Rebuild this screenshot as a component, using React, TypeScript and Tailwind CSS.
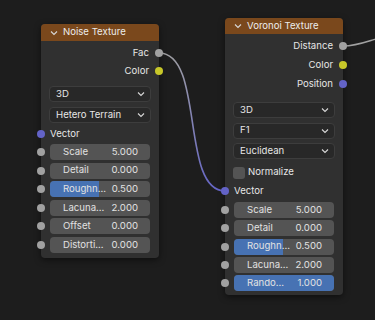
import React from "react";

const GRAY = "#a1a1a1";
const YELLOW = "#c7c729";
const PURPLE = "#6363c7";

function Socket({ color, side }: { color: string; side: "left" | "right" }) {
  return (
    <span
      className={`absolute top-1/2 -translate-y-1/2 w-[8px] h-[8px] rounded-full ${side === "left" ? "left-[-4px]" : "right-[-4px]"}`}
      style={{ backgroundColor: color }}
    />
  );
}

function Chevron({ className = "" }: { className?: string }) {
  return (
    <svg width="8" height="6" viewBox="0 0 8 6" className={className}>
      <path d="M1 1.5 L4 4.5 L7 1.5" stroke="#d8d8d8" strokeWidth="1.1" fill="none" />
    </svg>
  );
}

function OutRow({ label, color, h }: { label: string; color: string; h: string }) {
  return (
    <div className={`relative flex items-center justify-end pr-[10px] ${h}`}>
      <span>{label}</span>
      <Socket color={color} side="right" />
    </div>
  );
}

function InRow({ label, color, h, mt }: { label: string; color: string; h: string; mt: string }) {
  return (
    <div className={`relative flex items-center pl-[9px] ${h} ${mt}`}>
      <span>{label}</span>
      <Socket color={color} side="left" />
    </div>
  );
}

function Dropdown({ label, mt }: { label: string; mt: string }) {
  return (
    <div
      className={`mx-[8px] h-[16px] ${mt} flex items-center justify-between rounded-[4px] bg-[#282828] border border-[#3d3d3d] pl-[6px] pr-[5px]`}
    >
      <span>{label}</span>
      <Chevron />
    </div>
  );
}

function Field({ label, value, fill, mt }: { label: string; value: string; fill: number; mt: string }) {
  return (
    <div className={`relative h-[16px] ${mt}`}>
      <Socket color={GRAY} side="left" />
      <div className="relative mx-[9px] h-full rounded-[4px] bg-[#545454] overflow-hidden">
        <div className="absolute left-0 top-0 h-full bg-[#4772b3]" style={{ width: `${fill}%` }} />
        <div className="relative flex h-full items-center justify-between pl-[13px] pr-[12px] text-[#e2e2e2]">
          <span>{label}</span>
          <span>{value}</span>
        </div>
      </div>
    </div>
  );
}

function Header({ title, h }: { title: string; h: string }) {
  return (
    <div className={`flex items-center ${h} rounded-t-[4px] bg-[#7a481c] pl-[9px] gap-[5px]`}>
      <Chevron />
      <span className="text-[#ececec]">{title}</span>
    </div>
  );
}

export default function App() {
  return (
    <div
      className="relative w-[375px] h-[320px] overflow-hidden bg-[#1d1d1d] text-[9.6px] text-[#e6e6e6]"
      style={{ fontFamily: "Inter, 'DejaVu Sans', sans-serif" }}
    >
      <svg className="absolute inset-0" width="375" height="320">
        <defs>
          <linearGradient id="lg" x1="159" y1="53" x2="225" y2="191" gradientUnits="userSpaceOnUse">
            <stop offset="0" stopColor={GRAY} />
            <stop offset="1" stopColor={PURPLE} />
          </linearGradient>
        </defs>
        <path d="M159 53 C 205 53, 180 191, 225 191" stroke="url(#lg)" strokeWidth="1.6" fill="none" />
        <path d="M343 46 C 362 46, 372 38, 400 33" stroke={GRAY} strokeWidth="1.6" fill="none" />
      </svg>

      {/* Noise Texture */}
      <div className="absolute left-[41px] top-[24px] w-[118px] rounded-[4px] bg-[#303030] shadow-[0_2px_6px_rgba(0,0,0,0.5)] pb-[5px]">
        <Header title="Noise Texture" h="h-[17px]" />
        <div className="flex flex-col pt-[3px]">
          <OutRow label="Fac" color={GRAY} h="h-[18px]" />
          <OutRow label="Color" color={YELLOW} h="h-[18px]" />
          <Dropdown label="3D" mt="mt-[6px]" />
          <Dropdown label="Hetero Terrain" mt="mt-[5px]" />
          <InRow label="Vector" color={PURPLE} h="h-[18px]" mt="mt-[2px]" />
          <Field label="Scale" value="5.000" fill={0} mt="mt-[1px]" />
          <Field label="Detail" value="0.000" fill={0} mt="mt-[2.6px]" />
          <Field label="Roughn..." value="0.500" fill={49} mt="mt-[2.6px]" />
          <Field label="Lacuna..." value="2.000" fill={0} mt="mt-[2.6px]" />
          <Field label="Offset" value="0.000" fill={0} mt="mt-[2.6px]" />
          <Field label="Distorti..." value="0.000" fill={0} mt="mt-[2.6px]" />
        </div>
      </div>

      {/* Voronoi Texture */}
      <div className="absolute left-[225px] top-[18px] w-[118px] rounded-[4px] bg-[#303030] shadow-[0_2px_6px_rgba(0,0,0,0.5)] pb-[4px]">
        <Header title="Voronoi Texture" h="h-[16px]" />
        <div className="flex flex-col pt-[2.5px]">
          <OutRow label="Distance" color={GRAY} h="h-[19px]" />
          <OutRow label="Color" color={YELLOW} h="h-[19px]" />
          <OutRow label="Position" color={PURPLE} h="h-[19px]" />
          <Dropdown label="3D" mt="mt-[8.5px]" />
          <Dropdown label="F1" mt="mt-[4.5px]" />
          <Dropdown label="Euclidean" mt="mt-[4.5px]" />
          <div className="flex items-center h-[18px] mt-[4.5px] pl-[8px] gap-[3px]">
            <span className="w-[12px] h-[12px] rounded-[3px] bg-[#545454]" />
            <span>Normalize</span>
          </div>
          <InRow label="Vector" color={PURPLE} h="h-[18px]" mt="mt-[0.5px]" />
          <Field label="Scale" value="5.000" fill={0} mt="mt-[2px]" />
          <Field label="Detail" value="0.000" fill={0} mt="mt-[2.3px]" />
          <Field label="Roughn..." value="0.500" fill={49} mt="mt-[2.3px]" />
          <Field label="Lacuna..." value="2.000" fill={0} mt="mt-[2.3px]" />
          <Field label="Rando..." value="1.000" fill={100} mt="mt-[2.3px]" />
        </div>
      </div>
    </div>
  );
}
